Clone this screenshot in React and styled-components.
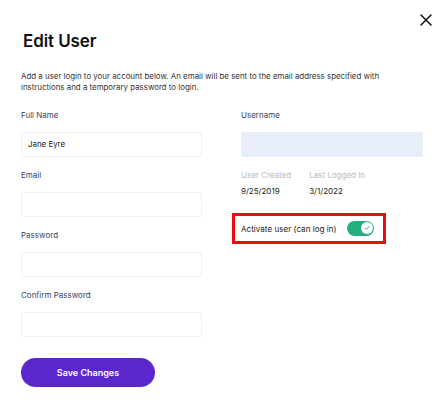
import React from "react";
import styled, { createGlobalStyle } from "styled-components";

const GlobalStyle = createGlobalStyle`
  html, body { margin: 0; padding: 0; background: #ffffff; }
  body { font-family: Inter, "Noto Sans", sans-serif; -webkit-font-smoothing: antialiased; }
  * { box-sizing: border-box; }
`;

const Page = styled.div`
  width: 447px;
  height: 406px;
  padding: 0 15px 0 21px;
  background: #fff;
`;

const CloseRow = styled.div`
  display: flex;
  justify-content: flex-end;
  padding-top: 14px;
`;

const CloseButton = styled.button`
  width: 12px;
  height: 12px;
  padding: 0;
  border: 0;
  background: none;
  display: flex;
  cursor: pointer;
`;

const Title = styled.h1`
  margin: 4.5px 0 0 2px;
  font-size: 17px;
  line-height: 21px;
  font-weight: 600;
  color: #111;
  letter-spacing: -0.1px;
`;

const Description = styled.p`
  margin: 19px 0 0;
  font-size: 7.9px;
  line-height: 11.5px;
  color: #333;
  max-width: 402px;
`;

const Grid = styled.div`
  display: grid;
  grid-template-columns: 181px 182px;
  column-gap: 39px;
  margin-top: 15px;
`;

const Column = styled.div`
  display: flex;
  flex-direction: column;
`;

const Field = styled.div`
  display: flex;
  flex-direction: column;
  margin-bottom: 12px;
`;

const Label = styled.label`
  font-size: 8px;
  line-height: 12px;
  color: #3a4562;
  margin-bottom: 11.5px;
`;

const Input = styled.input`
  height: 24.5px;
  width: 100%;
  border: 1px solid ${(p) => (p.$filled ? "#e8eef9" : "#eef0f7")};
  background: ${(p) => (p.$filled ? "#e8eef9" : "#fff")};
  border-radius: 2px;
  padding: 0 6px;
  font-family: inherit;
  font-size: 7.9px;
  color: #1a1a1a;
  outline: none;
`;

const MetaRow = styled.div`
  display: flex;
  gap: 18px;
`;

const Meta = styled.div`
  display: flex;
  flex-direction: column;
  gap: 4.5px;
`;

const MetaLabel = styled.span`
  font-size: 8px;
  line-height: 12px;
  color: #b7bbc5;
`;

const MetaValue = styled.span`
  font-size: 8px;
  line-height: 12px;
  color: #1d1d1d;
`;

const Highlight = styled.div`
  align-self: flex-start;
  margin: 16px 0 0 -9px;
  width: 154px;
  height: 31px;
  border: 3px solid #ec0a10;
  display: flex;
  align-items: center;
  justify-content: space-between;
  padding: 0 9px 0 6px;
`;

const ToggleText = styled.span`
  font-size: 8.1px;
  color: #1d1d1d;
`;

const Toggle = styled.span`
  width: 27px;
  height: 15px;
  border-radius: 8px;
  background: #22b07f;
  display: flex;
  align-items: center;
  justify-content: flex-end;
  padding-right: 1.5px;
  margin-top: -1px;
`;

const Knob = styled.span`
  width: 12px;
  height: 12px;
  border-radius: 50%;
  background: #fff;
  display: flex;
  align-items: center;
  justify-content: center;
`;

const SaveButton = styled.button`
  margin-top: 9.5px;
  width: 134px;
  height: 29px;
  border: 0;
  border-radius: 15px;
  background: #5b27cc;
  color: #fff;
  font-family: inherit;
  font-size: 9px;
  font-weight: 600;
  cursor: pointer;
`;

export default function App() {
  return (
    <>
      <GlobalStyle />
      <Page>
        <CloseRow>
          <CloseButton aria-label="Close">
            <svg width="12" height="12" viewBox="0 0 12 12">
              <path d="M1 1 L11 11 M11 1 L1 11" stroke="#111" strokeWidth="1.5" strokeLinecap="round" />
            </svg>
          </CloseButton>
        </CloseRow>
        <Title>Edit User</Title>
        <Description>
          Add a user login to your account below. An email will be sent to the email address specified with
          instructions and a temporary password to login.
        </Description>
        <Grid>
          <Column>
            <Field>
              <Label>Full Name</Label>
              <Input defaultValue="Jane Eyre" />
            </Field>
            <Field>
              <Label>Email</Label>
              <Input />
            </Field>
            <Field>
              <Label>Password</Label>
              <Input type="password" />
            </Field>
            <Field>
              <Label>Confirm Password</Label>
              <Input type="password" />
            </Field>
            <SaveButton>Save Changes</SaveButton>
          </Column>
          <Column>
            <Field>
              <Label>Username</Label>
              <Input $filled />
            </Field>
            <MetaRow>
              <Meta>
                <MetaLabel>User Created</MetaLabel>
                <MetaValue>9/25/2019</MetaValue>
              </Meta>
              <Meta>
                <MetaLabel>Last Logged In</MetaLabel>
                <MetaValue>3/1/2022</MetaValue>
              </Meta>
            </MetaRow>
            <Highlight>
              <ToggleText>Activate user (can log in)</ToggleText>
              <Toggle>
                <Knob>
                  <svg width="6" height="6" viewBox="0 0 6 6">
                    <path d="M1 3.2 L2.4 4.5 L5 1.6" stroke="#22b07f" strokeWidth="1" fill="none" strokeLinecap="round" strokeLinejoin="round" />
                  </svg>
                </Knob>
              </Toggle>
            </Highlight>
          </Column>
        </Grid>
      </Page>
    </>
  );
}
